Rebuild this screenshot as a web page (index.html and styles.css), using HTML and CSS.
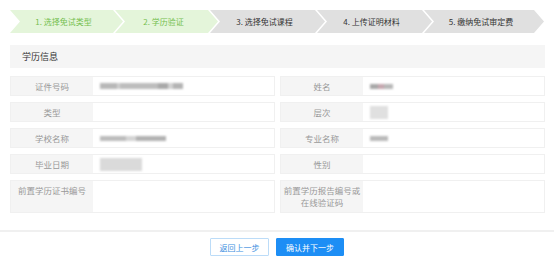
FILE: index.html
```html
<!DOCTYPE html>
<html lang="zh-CN">
<head>
    <meta charset="UTF-8">
    <meta name="viewport" content="width=device-width, initial-scale=1.0">
    <title>学历验证</title>
    <link rel="stylesheet" href="styles.css">
</head>
<body>
    <div class="page">
        <ul class="steps">
            <li class="step done">1. 选择免试类型</li>
            <li class="step done">2. 学历验证</li>
            <li class="step">3. 选择免试课程</li>
            <li class="step">4. 上传证明材料</li>
            <li class="step">5. 缴纳免试审定费</li>
        </ul>

        <div class="panel-title">学历信息</div>

        <div class="info-grid">
            <div class="cell">
                <div class="label">证件号码</div>
                <div class="value"><span class="mask mask-id"></span></div>
            </div>
            <div class="cell">
                <div class="label">姓名</div>
                <div class="value"><span class="mask mask-name"></span></div>
            </div>
            <div class="cell">
                <div class="label">类型</div>
                <div class="value"></div>
            </div>
            <div class="cell">
                <div class="label">层次</div>
                <div class="value"><span class="mask mask-level"></span></div>
            </div>
            <div class="cell">
                <div class="label">学校名称</div>
                <div class="value"><span class="mask mask-school"></span></div>
            </div>
            <div class="cell">
                <div class="label">专业名称</div>
                <div class="value"><span class="mask mask-major"></span></div>
            </div>
            <div class="cell">
                <div class="label">毕业日期</div>
                <div class="value"><span class="mask mask-date"></span></div>
            </div>
            <div class="cell">
                <div class="label">性别</div>
                <div class="value"></div>
            </div>
            <div class="cell tall">
                <div class="label">前置学历证书编号</div>
                <div class="value"></div>
            </div>
            <div class="cell tall">
                <div class="label">前置学历报告编号或<br>在线验证码</div>
                <div class="value"></div>
            </div>
        </div>
    </div>

    <div class="actions">
        <button class="btn btn-ghost">返回上一步</button>
        <button class="btn btn-primary">确认并下一步</button>
    </div>
</body>
</html>
```

FILE: styles.css
```css
body {
    margin: 0;
    background: #fff;
    font-family: "Noto Sans CJK SC", "Liberation Sans", sans-serif;
    color: #333;
}
.page {
    padding: 10px 9px 0 10px;
}
.steps {
    list-style: none;
    margin: 0;
    padding: 0;
    display: flex;
    height: 23px;
}
.step {
    flex: none;
    width: 115px;
    margin-left: -8px;
    padding-right: 6px;
    box-sizing: border-box;
    display: flex;
    align-items: center;
    justify-content: center;
    background: #e0e0e0;
    color: #333;
    font-size: 8px;
    clip-path: polygon(0 0, calc(100% - 10px) 0, 100% 50%, calc(100% - 10px) 100%, 0 100%, 10px 50%);
}
.step:nth-child(1) { width: 113px; margin-left: 0; }
.step:nth-child(2) { width: 103px; }
.step:nth-child(5) { width: 120px; }
.step.done {
    background: #e4f5da;
    color: #74bf4f;
}
.panel-title {
    margin-top: 12px;
    height: 23px;
    line-height: 23px;
    padding-left: 12px;
    background: #f5f5f5;
    font-size: 9px;
    color: #333;
}
.info-grid {
    margin-top: 8px;
    display: grid;
    grid-template-columns: 1fr 1fr;
    gap: 6px 5px;
}
.cell {
    display: flex;
    height: 20px;
    border: 1px solid #f0f0f0;
    box-sizing: border-box;
}
.cell.tall {
    height: 33px;
}
.label {
    width: 82px;
    flex: none;
    background: #f5f5f5;
    color: #999;
    font-size: 8.5px;
    display: flex;
    align-items: center;
    justify-content: center;
    text-align: center;
    line-height: 12px;
}
.cell.tall .label {
    align-items: flex-start;
    padding-top: 3px;
    box-sizing: border-box;
}
.value {
    flex: 1;
    background: #fff;
    padding-left: 7px;
    display: flex;
    align-items: center;
}
.mask {
    display: block;
    background: #c4c4c4;
    filter: blur(0.8px);
}
.mask-id {
    width: 83px;
    height: 6px;
    background: linear-gradient(90deg, #b8b8b8 0 20%, #d0d0d0 20% 24%, #bdbdbd 24% 70%, #a9a9a9 70% 82%, #d2d2d2 82% 88%, #b4b4b4 88%);
}
.mask-name {
    width: 23px;
    height: 5px;
    background: linear-gradient(90deg, #a8a8a8 0 35%, #c6a8b0 35% 60%, #b8b8b8 60%);
}
.mask-level { width: 18px; height: 13px; background: #e0e0e0; }
.mask-school {
    width: 66px;
    height: 5px;
    background: linear-gradient(90deg, #bcbcbc 0 40%, #d4d4d4 40% 55%, #b2b2b2 55%);
}
.mask-major { width: 18px; height: 5px; background: #bababa; }
.mask-date { width: 42px; height: 13px; background: #dadada; }
.actions {
    margin-top: 17px;
    border-top: 2px solid #f0f0f0;
    padding-top: 6px;
    display: flex;
    justify-content: center;
    gap: 7px;
}
.btn {
    height: 18px;
    padding: 0;
    border-radius: 1px;
    font-family: inherit;
    font-size: 8px;
    cursor: pointer;
}
.btn-ghost {
    width: 59px;
    background: #fff;
    border: 1px solid #bcdcf8;
    color: #3d8fe0;
}
.btn-primary {
    width: 68px;
    background: #1d8ef5;
    border: 1px solid #1d8ef5;
    color: #fff;
}
```
